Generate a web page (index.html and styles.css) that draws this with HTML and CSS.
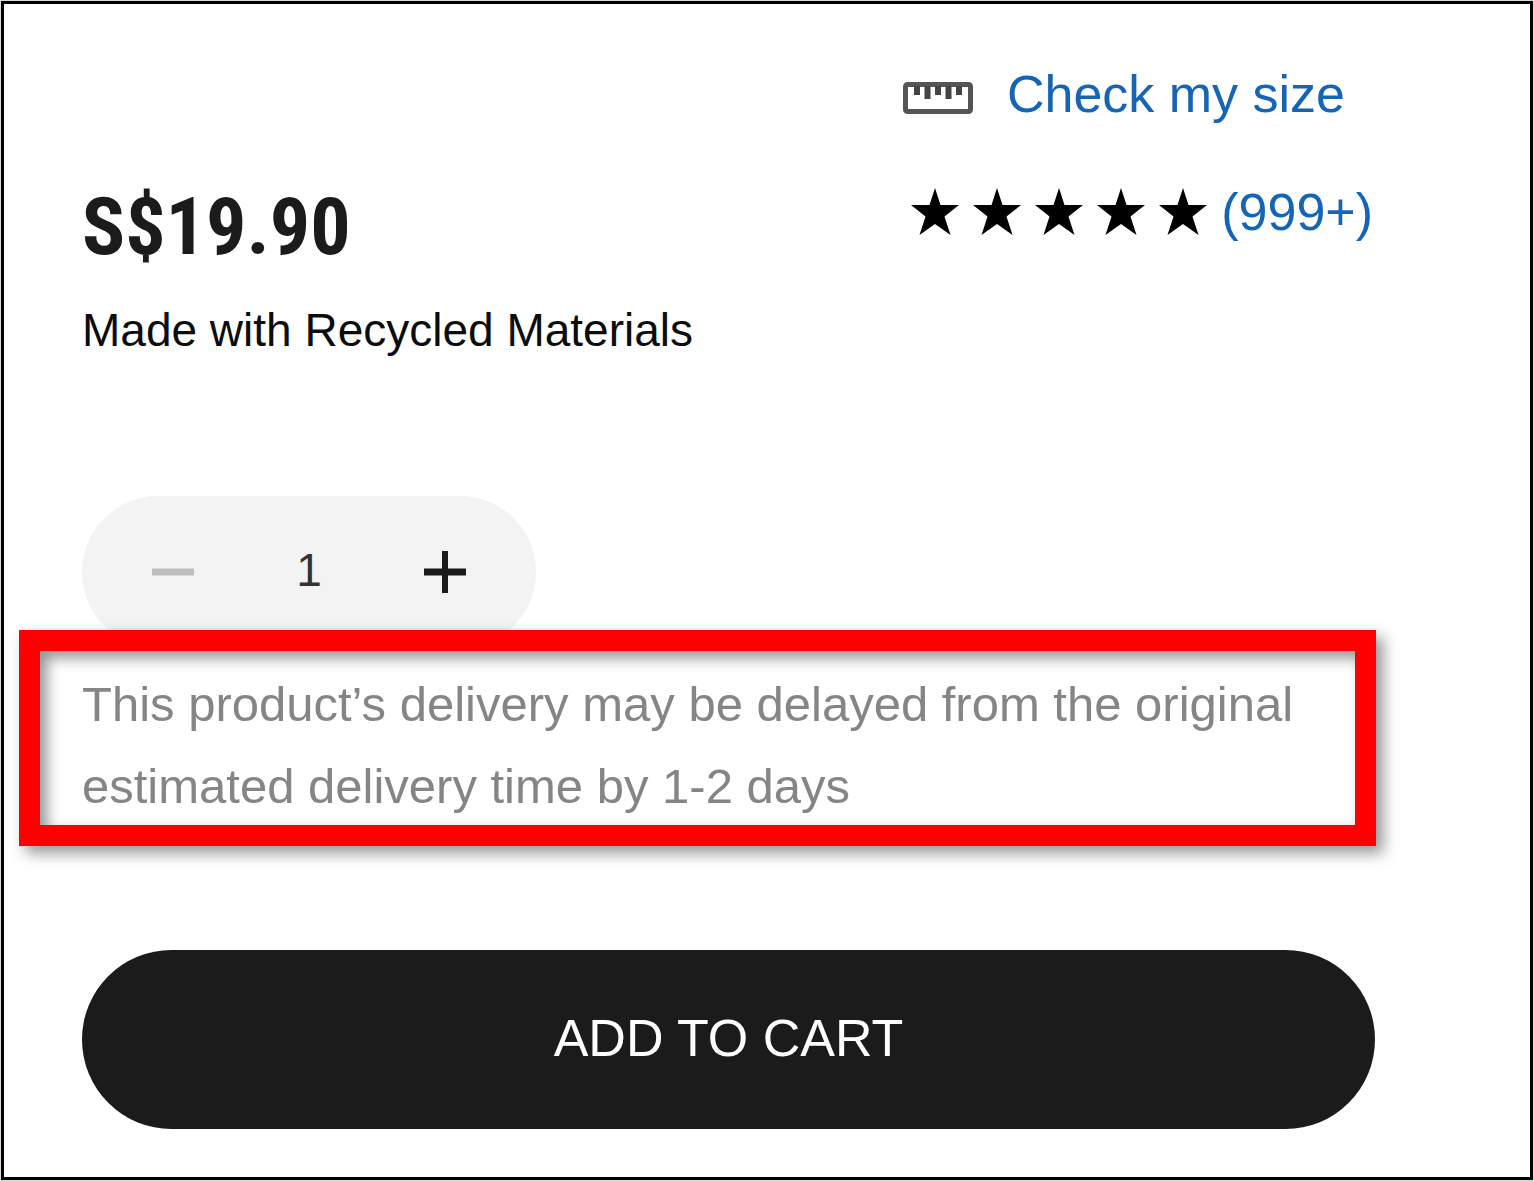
FILE: index.html
```html
<!DOCTYPE html>
<html lang="en">
<head>
<meta charset="utf-8">
<meta name="viewport" content="width=device-width, initial-scale=1">
<title>Product</title>
<link rel="stylesheet" href="styles.css">
</head>
<body>
<main class="product">
  <a class="size-link" href="#size">
    <svg class="ruler" viewBox="0 0 70 32" aria-hidden="true">
      <rect x="2.5" y="2.5" width="65" height="27" rx="2" fill="none" stroke="#555" stroke-width="5"/>
      <path d="M14 4v9M24.500 4v13M35 4v9M45.500 4v13M56 4v9" fill="none" stroke="#444" stroke-width="6"/>
    </svg>
    Check my size
  </a>
  <div class="summary">
    <p class="price">S$19.90</p>
    <a class="rating" href="#reviews" aria-label="5 stars, 999+ reviews">
      <svg class="stars" viewBox="0 0 296 48" aria-hidden="true">
        <defs><path id="star" d="M24 0L29.500 17H48L33.500 28.500L39.500 47L24 36L8.500 47L14.500 28.500L0 17H18.500Z"/></defs>
        <use href="#star"/><use href="#star" x="62"/><use href="#star" x="124"/><use href="#star" x="186"/><use href="#star" x="248"/>
      </svg>
      (999+)
    </a>
  </div>
  <p class="material">Made with Recycled Materials</p>
  <div class="quantity">
    <button class="step" type="button" aria-label="Decrease quantity" disabled>
      <svg viewBox="0 0 42 42" aria-hidden="true"><path d="M0 21H42" stroke="currentColor" stroke-width="7"/></svg>
    </button>
    <input class="count" type="text" inputmode="numeric" value="1" aria-label="Quantity">
    <button class="step" type="button" aria-label="Increase quantity">
      <svg viewBox="0 0 42 42" aria-hidden="true"><path d="M0 21H42" stroke="currentColor" stroke-width="7"/><path d="M21 0V42" stroke="currentColor" stroke-width="6"/></svg>
    </button>
  </div>
  <p class="notice">This product’s delivery may be delayed from the original estimated delivery time by 1-2 days</p>
  <button class="add" type="button">ADD TO CART</button>
</main>
</body>
</html>
```
FILE: styles.css
```css
* {
  box-sizing: border-box;
}

body {
  margin: 0;
  padding: 1px;
  background: #d8dcd9;
  font-family: "Liberation Sans", Arial, sans-serif;
  color: #1b1b1b;
}

.product {
  display: flex;
  flex-direction: column;
  min-height: calc(100vh - 2px);
  padding: 60px 155px 48px 78px;
  border: 3px solid #000;
  background: #fff;
}

p {
  margin: 0;
}

a {
  color: #1464b8;
  text-decoration: none;
}

.size-link {
  display: flex;
  align-items: center;
  align-self: flex-end;
  gap: 34px;
  margin-right: 30px;
  font-size: 52px;
  line-height: 60px;
}

.ruler {
  width: 70px;
  height: 32px;
  margin-top: 8px;
}

.summary {
  display: flex;
  justify-content: space-between;
  align-items: flex-start;
  margin-top: 58px;
}

.price {
  font-family: "Roboto Condensed", "Arial Narrow", "Liberation Sans", sans-serif;
  font-size: 80px;
  font-weight: 700;
  line-height: 90px;
}

.rating {
  display: flex;
  align-items: center;
  gap: 14px;
  margin-right: 2px;
  font-size: 52px;
  line-height: 60px;
}

.stars {
  width: 296px;
  height: 48px;
  fill: #000;
}

.material {
  margin-top: 30px;
  color: #0c0c0c;
  font-size: 46px;
  line-height: 56px;
}

.quantity {
  display: flex;
  align-items: center;
  justify-content: space-between;
  width: 454px;
  height: 152px;
  margin-top: 138px;
  padding: 0 70px;
  border-radius: 76px;
  background: #f3f3f3;
}

.step {
  width: 42px;
  height: 42px;
  padding: 0;
  border: 0;
  background: none;
  color: #1b1b1b;
}

.step:disabled {
  color: #bdbdbd;
}

.step svg {
  display: block;
}

.count {
  width: 100px;
  padding: 0 0 4px;
  border: 0;
  background: none;
  color: #333;
  font-family: inherit;
  font-size: 46px;
  line-height: 56px;
  text-align: center;
}

.notice {
  position: relative;
  margin-top: 15px;
  color: #858585;
  font-size: 49px;
  line-height: 82px;
}

/* Highlight frame laid over the delivery notice */
.notice::before {
  content: "";
  position: absolute;
  inset: -33px -1px -19px -63px;
  border: 21px solid #f00;
  box-shadow: 7px 7px 14px rgba(0, 0, 0, 0.42), inset 7px 7px 14px rgba(0, 0, 0, 0.42);
  pointer-events: none;
}

.add {
  height: 179px;
  margin-top: 123px;
  padding: 0 0 4px;
  border: 0;
  border-radius: 90px;
  background: #1b1b1b;
  color: #fff;
  font-family: inherit;
  font-size: 52px;
}
```
